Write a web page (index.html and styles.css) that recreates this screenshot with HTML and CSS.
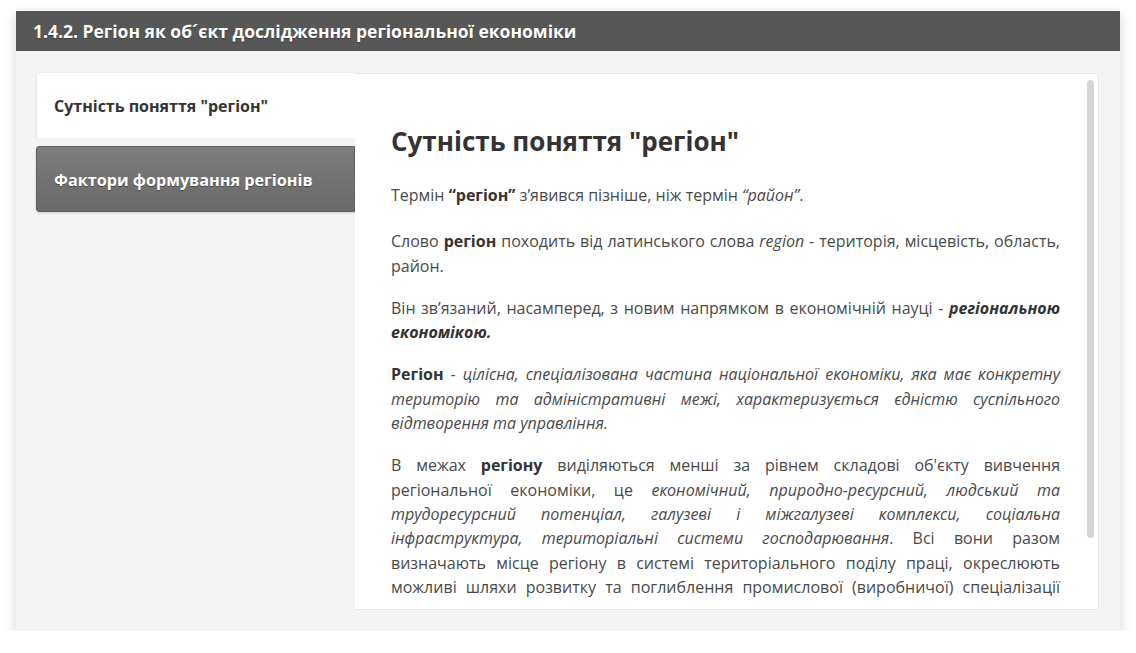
FILE: index.html
```html
<!DOCTYPE html>
<html lang="uk">
<head>
<meta charset="utf-8">
<title>Регіон як об´єкт дослідження регіональної економіки</title>
<link rel="stylesheet" href="styles.css">
</head>
<body>
<div class="card">
  <div class="card-header">1.4.2. Регіон як об´єкт дослідження регіональної економіки</div>
  <div class="card-body">
    <div class="tabs">
      <div class="tab tab-active">Сутність поняття "регіон"</div>
      <div class="tab tab-inactive">Фактори формування регіонів</div>
    </div>
    <div class="panel">
      <div class="scroll">
        <h2 class="title">Сутність поняття "регіон"</h2>
        <p class="first">Термін <b>“регіон”</b> з’явився пізніше, ніж термін <i>“район”</i>.</p>
        <p>Слово <b>регіон</b> походить від латинського слова <i>region</i> - територія, місцевість, область, район.</p>
        <p>Він зв’язаний, насамперед, з новим напрямком в економічній науці - <b><i>регіональною економікою.</i></b></p>
        <p><b>Регіон</b> - <i>цілісна, спеціалізована частина національної економіки, яка має конкретну територію та адміністративні межі, характеризується єдністю суспільного відтворення та управління.</i></p>
        <p>В межах <b>регіону</b> виділяються менші за рівнем складові об'єкту вивчення регіональної економіки, це <i>економічний, природно-ресурсний, людський та трудоресурсний потенціал, галузеві і міжгалузеві комплекси, соціальна інфраструктура, територіальні системи господарювання</i>. Всі вони разом визначають місце регіону в системі територіального поділу праці, окреслюють можливі шляхи розвитку та поглиблення промислової (виробничої) спеціалізації регіону, його роль у загальнодержавному поділі праці.</p>
      </div>
      <div class="thumb"></div>
    </div>
  </div>
</div>
</body>
</html>
```
FILE: styles.css
```css
html, body {
  margin: 0;
  padding: 0;
  background: #ffffff;
}
body {
  font-family: "Open Sans", "Noto Sans", sans-serif;
}
.card {
  margin: 11px 16px 0;
  width: 1104px;
  height: 620px;
  display: flex;
  flex-direction: column;
  box-shadow: 0 3px 12px rgba(0, 0, 0, 0.16);
}
.card-header {
  height: 40px;
  flex: none;
  background: #575757;
  color: #ffffff;
  font-weight: 700;
  font-size: 17.5px;
  padding: 0 17px;
  display: flex;
  align-items: center;
  text-shadow: 0 1px 1px rgba(0, 0, 0, 0.3);
}
.card-body {
  flex: 1;
  min-height: 0;
  background: #f4f4f4;
  padding: 22px 21px 21px;
  display: flex;
}
.tabs {
  width: 318px;
  flex: none;
  display: flex;
  flex-direction: column;
  gap: 8px;
}
.tab {
  height: 65px;
  box-sizing: border-box;
  padding-left: 17px;
  display: flex;
  align-items: center;
  font-size: 16px;
  font-weight: 700;
  border-radius: 3px 0 0 3px;
}
.tab-active {
  background: #ffffff;
  color: #333333;
  box-shadow: -1px 0 2px rgba(0, 0, 0, 0.06);
}
.tab-inactive {
  height: 66px;
  margin-left: -1px;
  padding-top: 2px;
  font-size: 16.2px;
  background: linear-gradient(#7d7d7d, #696969);
  border: 1px solid #5f5f5f;
  color: #ffffff;
  text-shadow: 0 1px 1px rgba(0, 0, 0, 0.35);
  box-shadow: 0 1px 3px rgba(0, 0, 0, 0.15);
}
.panel {
  position: relative;
  flex: 1;
  min-width: 0;
  background: #ffffff;
  border: 1px solid #e6e6e6;
  border-left: none;
  border-radius: 0 3px 3px 0;
  padding: 6px 4px 12px 0;
  display: flex;
}
.scroll {
  flex: 1;
  overflow: hidden;
  padding: 0 34px 18px 36px;
  color: #4a4a4a;
  font-size: 16px;
  line-height: 24.3px;
}
.thumb {
  position: absolute;
  top: 6px;
  right: 4px;
  width: 7px;
  height: 458px;
  background: #d5d5d5;
  border-radius: 4px;
}
.title {
  margin: 46px 0 26px;
  font-size: 26px;
  line-height: 31px;
  font-weight: 700;
  color: #333333;
}
.scroll p {
  margin: 0 0 18px;
  text-align: justify;
}
.scroll p.first {
  margin-bottom: 22px;
}
.scroll b {
  color: #333333;
}
```
